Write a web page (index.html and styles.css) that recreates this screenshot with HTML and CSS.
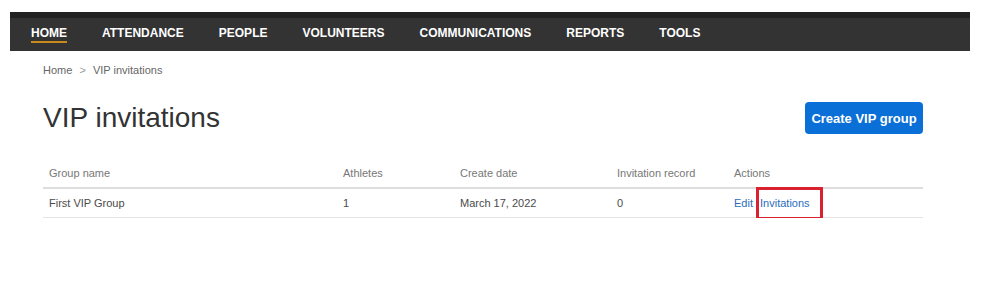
FILE: index.html
```
<!DOCTYPE html>
<html lang="en">
<head>
    <meta charset="UTF-8">
    <meta name="viewport" content="width=device-width, initial-scale=1.0">
    <title>VIP invitations</title>
    <link rel="stylesheet" href="styles.css">
</head>
<body>
    <div class="topnav">
        <ul>
            <li><a href="#" class="active">HOME</a></li>
            <li><a href="#">ATTENDANCE</a></li>
            <li><a href="#">PEOPLE</a></li>
            <li><a href="#">VOLUNTEERS</a></li>
            <li><a href="#">COMMUNICATIONS</a></li>
            <li><a href="#">REPORTS</a></li>
            <li><a href="#">TOOLS</a></li>
        </ul>
    </div>

    <div class="content">
        <div class="crumbs">
            <a href="#">Home</a>
            <span class="sep">&gt;</span>
            <span>VIP invitations</span>
        </div>

        <div class="head">
            <h1>VIP invitations</h1>
            <button class="create">Create VIP group</button>
        </div>

        <table class="groups">
            <colgroup>
                <col style="width: 294px">
                <col style="width: 117px">
                <col style="width: 157px">
                <col style="width: 117px">
                <col style="width: 195px">
            </colgroup>
            <thead>
                <tr>
                    <th>Group name</th>
                    <th>Athletes</th>
                    <th>Create date</th>
                    <th>Invitation record</th>
                    <th>Actions</th>
                </tr>
            </thead>
            <tbody>
                <tr>
                    <td>First VIP Group</td>
                    <td>1</td>
                    <td>March 17, 2022</td>
                    <td>0</td>
                    <td>
                        <a href="#" class="act">Edit</a>
                        <a href="#" class="act marked">Invitations</a>
                    </td>
                </tr>
            </tbody>
        </table>
    </div>
</body>
</html>
```

FILE: styles.css
```
*{
    padding: 0;
    margin: 0;
    box-sizing: border-box;
}
body{
    background-color: #fff;
    padding-top: 12px;
    font-family: "Liberation Sans", Arial, sans-serif;
}
a{
    text-decoration: none;
}

/* top menu */
.topnav{
    width: 960px;
    margin-left: 10px;
    height: 39px;
    background-color: #333;
    border-top: 6px solid #222;
}
.topnav ul{
    list-style: none;
    display: flex;
    gap: 35px;
    padding-left: 21px;
}
.topnav a{
    display: block;
    color: #fff;
    font-size: 12px;
    font-weight: bold;
    line-height: 14px;
    padding-top: 8px;
    padding-bottom: 1px;
    border-bottom: 2px solid transparent;
}
.topnav a.active{
    border-bottom-color: #c98a1c;
}

/* page */
.content{
    width: 880px;
    margin-left: 43px;
}
.crumbs{
    padding-top: 12px;
    font-size: 11px;
    line-height: 14px;
    color: #666;
}
.crumbs a{
    color: #666;
}
.crumbs .sep{
    color: #999;
    margin: 0 4px;
}
.head{
    display: flex;
    justify-content: space-between;
    align-items: center;
    margin-top: 25px;
}
.head h1{
    font-size: 28px;
    font-weight: normal;
    line-height: 32px;
    color: #333;
}
.create{
    width: 118px;
    height: 32px;
    border: none;
    border-radius: 4px;
    background-color: #0a6fd6;
    color: #fff;
    font-family: "Liberation Sans", Arial, sans-serif;
    font-size: 13px;
    font-weight: bold;
}

/* table */
.groups{
    width: 880px;
    table-layout: fixed;
    border-collapse: collapse;
    margin-top: 24px;
    font-size: 11px;
    line-height: 14px;
}
.groups th{
    text-align: left;
    font-weight: normal;
    color: #777;
    padding: 8px 6px 7px;
    border-bottom: 2px solid #ddd;
}
.groups td{
    color: #4a4a4a;
    padding: 7px 6px 7px;
    border-bottom: 1px solid #e3e3e3;
}
.act{
    color: #2a6cbc;
}
.act.marked{
    position: relative;
    margin-left: 4px;
}
.act.marked::after{
    content: "";
    position: absolute;
    left: -4px;
    right: -13px;
    top: -10px;
    bottom: -11px;
    border: 3px solid #d9222d;
}
```
